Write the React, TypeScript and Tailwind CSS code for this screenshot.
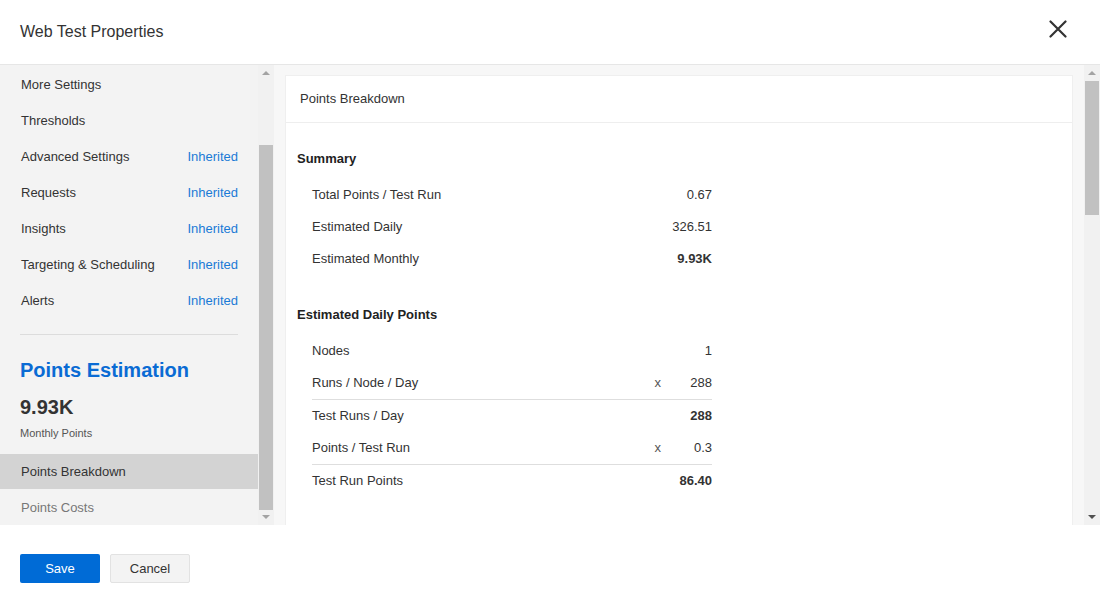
import React from 'react';

const navItems = [
  { label: 'More Settings', status: '' },
  { label: 'Thresholds', status: '' },
  { label: 'Advanced Settings', status: 'Inherited' },
  { label: 'Requests', status: 'Inherited' },
  { label: 'Insights', status: 'Inherited' },
  { label: 'Targeting & Scheduling', status: 'Inherited' },
  { label: 'Alerts', status: 'Inherited' },
];

const summary = [
  { label: 'Total Points / Test Run', value: '0.67', bold: false },
  { label: 'Estimated Daily', value: '326.51', bold: false },
  { label: 'Estimated Monthly', value: '9.93K', bold: true },
];

const daily = [
  { label: 'Nodes', value: '1', x: false, bold: false, line: false },
  { label: 'Runs / Node / Day', value: '288', x: true, bold: false, line: true },
  { label: 'Test Runs / Day', value: '288', x: false, bold: true, line: false },
  { label: 'Points / Test Run', value: '0.3', x: true, bold: false, line: true },
  { label: 'Test Run Points', value: '86.40', x: false, bold: true, line: false },
];

function Scrollbar({ thumbTop, thumbHeight, downDark }: { thumbTop: number; thumbHeight: number; downDark?: boolean }) {
  return (
    <div className="relative w-[16px] h-full bg-[#f1f1f1]">
      <div className="absolute left-1/2 top-[6px] -translate-x-1/2 w-0 h-0 border-l-[4px] border-r-[4px] border-b-[4px] border-l-transparent border-r-transparent border-b-[#a3a3a3]" />
      <div
        className="absolute left-[1px] right-[1px] bg-[#c1c1c1]"
        style={{ top: thumbTop, height: thumbHeight }}
      />
      <div
        className={`absolute left-1/2 bottom-[6px] -translate-x-1/2 w-0 h-0 border-l-[4px] border-r-[4px] border-t-[4px] border-l-transparent border-r-transparent ${
          downDark ? 'border-t-[#505050]' : 'border-t-[#a3a3a3]'
        }`}
      />
    </div>
  );
}

export default function App() {
  return (
    <div
      className="w-[1100px] h-[600px] flex flex-col bg-white text-[#333]"
      style={{ fontFamily: '"Liberation Sans", Arial, sans-serif' }}
    >
      {/* Header */}
      <div className="h-[64px] shrink-0 flex items-center justify-between pl-5 pr-[33px]">
        <h1 className="text-[16px] text-[#333] -mt-[1px]">Web Test Properties</h1>
        <svg width="18" height="18" viewBox="0 0 18 18" className="text-[#333] -mt-[6px]">
          <path d="M1.5 1.5 L16.5 16.5 M16.5 1.5 L1.5 16.5" stroke="currentColor" strokeWidth="2.2" strokeLinecap="round" />
        </svg>
      </div>

      {/* Body */}
      <div className="h-[461px] shrink-0 flex border-t border-[#e6e6e6]">
        {/* Sidebar */}
        <div className="w-[258px] bg-[#f3f3f3] overflow-hidden flex flex-col pt-[2px]">
          {navItems.map((item) => (
            <div key={item.label} className="h-9 shrink-0 flex items-center justify-between pl-[21px] pr-5 text-[13px]">
              <span className="text-[#333]">{item.label}</span>
              {item.status && <span className="text-[#1a7ad6]">{item.status}</span>}
            </div>
          ))}
          <div className="mx-5 mt-[15px] border-t border-[#dcdcdc]" />
          <div className="px-5 mt-[23px] text-[20px] leading-6 font-bold text-[#0a6bd4]">Points Estimation</div>
          <div className="px-5 mt-[13px] text-[20px] leading-6 font-bold text-[#333]">9.93K</div>
          <div className="px-5 mt-[7px] text-[11px] leading-[14px] text-[#555]">Monthly Points</div>
          <div className="mt-[14px] h-[35px] shrink-0 bg-[#d3d3d3] flex items-center pl-[21px] text-[13px] font-medium text-[#333]">
            Points Breakdown
          </div>
          <div className="h-9 shrink-0 flex items-center pt-[2px] pl-[21px] text-[13px] text-[#777]">Points Costs</div>
        </div>
        <Scrollbar thumbTop={80} thumbHeight={365} />

        {/* Content */}
        <div className="flex-1 flex bg-[#f7f7f7]">
          <div className="flex-1 pt-[10px] pl-[11px] pr-[11px] overflow-hidden">
            <div className="bg-white h-full border-l border-t border-r border-[#efefef]">
              <div className="h-[47px] flex items-center pl-[14px] border-b border-[#eeeeee] text-[13px] text-[#333]">
                Points Breakdown
              </div>
              <div className="pl-[11px] mt-[20px]">
                <div className="h-8 flex items-center text-[13px] font-bold text-[#222]">Summary</div>
                <div className="w-[415px] pl-[15px] mt-1">
                  {summary.map((r) => (
                    <div key={r.label} className="h-8 flex items-center text-[13px]">
                      <span className="flex-1">{r.label}</span>
                      <span className={r.bold ? 'font-bold' : ''}>{r.value}</span>
                    </div>
                  ))}
                </div>
                <div className="h-8 mt-6 flex items-center text-[13px] font-bold text-[#222]">Estimated Daily Points</div>
                <div className="w-[415px] pl-[15px] mt-1">
                  {daily.map((r) => (
                    <div
                      key={r.label}
                      className={`h-8 flex items-center text-[13px] ${r.line ? 'border-b border-[#dedede] box-content' : ''}`}
                    >
                      <span className="flex-1">{r.label}</span>
                      {r.x && <span className="text-[#555] mr-[27px]">x</span>}
                      <span className={`min-w-[24px] text-right ${r.bold ? 'font-bold' : ''}`}>{r.value}</span>
                    </div>
                  ))}
                </div>
              </div>
            </div>
          </div>
          <div className="flex flex-col">
            <Scrollbar thumbTop={16} thumbHeight={134} downDark />
          </div>
        </div>
      </div>

      {/* Footer */}
      <div className="flex-1 flex items-start gap-[10px] px-5 pt-[29px]">
        <button className="w-20 h-[29px] bg-[#006bd6] text-white text-[13px] rounded-[2px]">Save</button>
        <button className="w-20 h-[29px] bg-[#f3f3f3] border border-[#e2e2e2] text-[#333] text-[13px] rounded-[2px]">
          Cancel
        </button>
      </div>
    </div>
  );
}
